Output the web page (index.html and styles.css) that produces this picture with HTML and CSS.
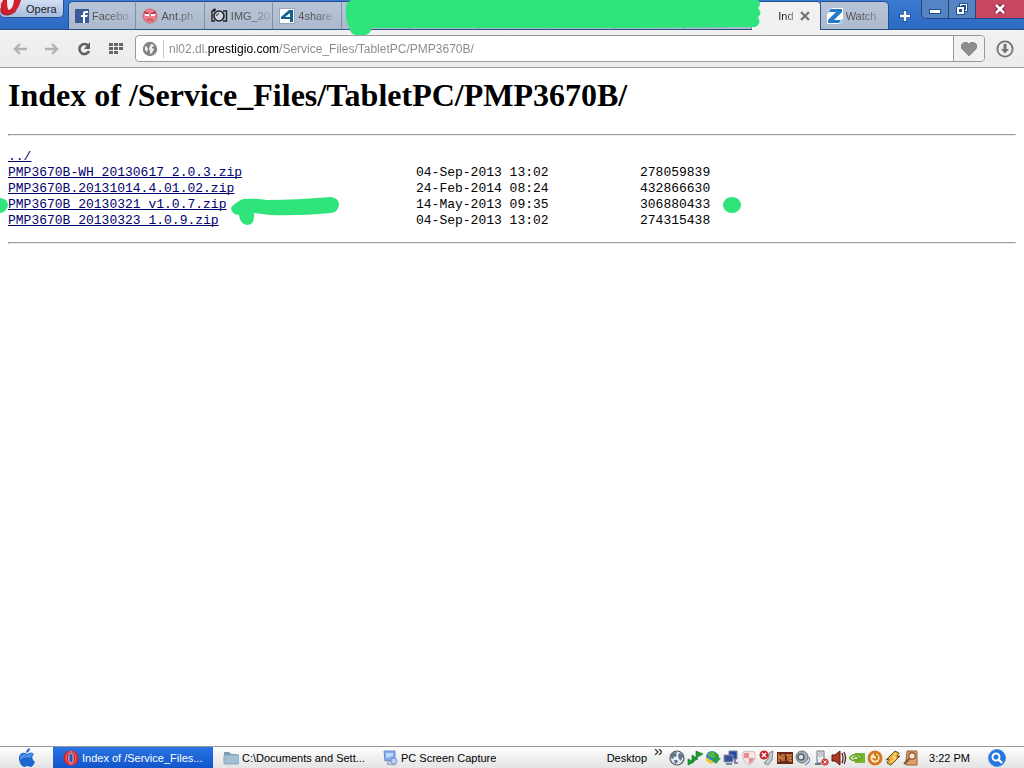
FILE: index.html
```html
<!DOCTYPE html>
<html lang="en">

<head>
    <meta charset="UTF-8">
    <meta name="viewport" content="width=device-width, initial-scale=1.0">
    <title>Index of /Service_Files/TabletPC/PMP3670B/</title>
    <link rel="stylesheet" href="styles.css">
</head>

<body>
    <header class="titlebar">
        <button class="opera">
            <svg width="22" height="17" viewBox="0 0 22 17">
                <path d="M1 0V12Q2 15 8 15Q18 13 21 0Z" fill="#d41f2a" />
                <path d="M1 8V12Q2 15 8 15Q13 14 16 11" fill="none" stroke="#8d1c2b" />
                <path d="M7 0Q7 10 9 10Q13 9 14 0Z" fill="#eef1f8" />
                <path d="M1 0V4L3 0Z" fill="#eef1f8" />
            </svg>
            <span>Opera</span>
        </button>
        <nav class="tabs">
            <button class="tab">
                <svg width="14" height="14" viewBox="0 0 14 14">
                    <rect width="14" height="14" fill="#3b5998" />
                    <path d="M8 14V8H6V6H8V4Q8 2 11 2H13V4H11Q10 4 10 5V6H13L12 8H10V14Z" fill="#fff" />
                </svg>
                <span>Facebo</span>
            </button>
            <button class="tab">
                <svg width="16" height="16" viewBox="0 0 16 16">
                    <circle cx="8" cy="8" r="7" fill="#ef7f88" stroke="#d9606b" />
                    <path d="M2 4L7 6M14 4L9 6" stroke="#a8323f" stroke-width="1.4" />
                    <rect x="3" y="6" width="4" height="2" fill="#fff" />
                    <rect x="9" y="6" width="4" height="2" fill="#fff" />
                    <path d="M5 12Q8 9 11 12Z" fill="#fff" stroke="#b53c49" />
                </svg>
                <span>Ant.ph</span>
            </button>
            <button class="tab">
                <svg width="17" height="16" viewBox="0 0 17 16">
                    <path d="M4 3H1V13H4M12 3H15.500V13H12M2 1.500H5" fill="none" stroke="#222" stroke-width="1.4" />
                    <circle cx="8" cy="8" r="5" fill="#cdd5e2" stroke="#222" stroke-width="1.6" />
                    <path d="M5.500 8Q6 5.500 8 5.500" fill="none" stroke="#222" />
                </svg>
                <span>IMG_20</span>
            </button>
            <button class="tab">
                <svg width="16" height="16" viewBox="0 0 16 16">
                    <rect x=".5" y=".5" width="15" height="15" fill="#fff" stroke="#9aa9b9" />
                    <path d="M10 2H14V14H11V11H2V9ZM11 5L6 9H11Z" fill="#13618f" fill-rule="evenodd" />
                </svg>
                <span>4share</span>
            </button>
            <button class="tab" aria-label="Tab 5"></button>
            <button class="tab" aria-label="Tab 6"></button>
            <button class="tab" aria-label="Tab 7"></button>
            <button class="tab" aria-label="Tab 8"></button>
            <button class="tab" aria-label="Tab 9"></button>
            <button class="tab" aria-label="Tab 10"></button>
            <button class="tab active">
                <span>Ind</span>
                <svg width="10" height="10" viewBox="0 0 10 10">
                    <path d="M1 1L9 9M9 1L1 9" stroke="#777" stroke-width="2.4" />
                </svg>
            </button>
            <button class="tab last">
                <svg width="16" height="16" viewBox="0 0 16 16">
                    <rect width="16" height="16" fill="#fff" />
                    <path d="M0 0H5L1 6H0ZM16 16H12L15 11H16Z" fill="#a9cdee" />
                    <path d="M4 1H15V4L7 12H14L12 15H1V12L9 4H2Z" fill="#257bc4" />
                </svg>
                <span>Watch</span>
            </button>
        </nav>
        <button class="new-tab" aria-label="New tab">
            <svg width="12" height="12" viewBox="0 0 12 12">
                <path d="M6 0V12M0 6H12" stroke="#1c4e99" stroke-width="4" />
                <path d="M6 1V11M1 6H11" stroke="#fff" stroke-width="2.4" />
            </svg>
        </button>
        <div class="window-buttons">
            <button aria-label="Minimize">
                <svg width="12" height="12" viewBox="0 0 12 12">
                    <rect x=".5" y="6.5" width="11" height="4" fill="#fff" stroke="#24508f" />
                </svg>
            </button>
            <button aria-label="Restore">
                <svg width="12" height="12" viewBox="0 0 12 12">
                    <rect x="3" y="0" width="9" height="9" rx="1" fill="#24508f" />
                    <rect x="4.500" y="1.500" width="6" height="6" fill="none" stroke="#fff" />
                    <rect x="0" y="3" width="9" height="9" rx="1" fill="#24508f" />
                    <rect x="2" y="5" width="5" height="5" fill="#24508f" stroke="#fff" stroke-width="2" />
                </svg>
            </button>
            <button class="close" aria-label="Close">
                <svg width="12" height="10" viewBox="0 0 12 10">
                    <path d="M2 1L10 9M10 1L2 9" stroke="#86233b" stroke-width="5" />
                    <path d="M2 1L10 9M10 1L2 9" stroke="#fff" stroke-width="2.6" />
                </svg>
            </button>
        </div>
    </header>

    <div class="toolbar">
        <button class="tool" aria-label="Back">
            <svg width="14" height="12" viewBox="0 0 14 12">
                <path d="M7 1L2 6L7 11M2 6H14" fill="none" stroke="#b2b2b2" stroke-width="2.4" />
            </svg>
        </button>
        <button class="tool" aria-label="Forward">
            <svg width="14" height="12" viewBox="0 0 14 12">
                <path d="M7 1L12 6L7 11M12 6H0" fill="none" stroke="#b2b2b2" stroke-width="2.4" />
            </svg>
        </button>
        <button class="tool" aria-label="Reload">
            <svg width="14" height="14" viewBox="0 0 14 14">
                <path d="M11 3.5A5 5 0 1 0 12 9" fill="none" stroke="#606060" stroke-width="2.6" />
                <path d="M13 0V7H7Z" fill="#606060" />
            </svg>
        </button>
        <button class="tool" aria-label="Speed Dial">
            <svg width="14" height="12" viewBox="0 0 14 12">
                <path d="M0 1.5H14M0 5.5H14" stroke="#666" stroke-width="3" stroke-dasharray="4 1" />
                <path d="M0 9.5H9" stroke="#666" stroke-width="3" stroke-dasharray="4 1" />
            </svg>
        </button>
        <form class="address">
            <svg class="globe" width="16" height="16" viewBox="0 0 16 16">
                <circle cx="8" cy="8" r="7.2" fill="#858585" />
                <path d="M9 3L12 4L12 5L10 6L10 7L12 8L10 12L8 13L8 10L7 8L8 5ZM3 5L5 6L6 8L5 11L3 9Z" fill="#efefef" />
            </svg>
            <input type="text" id="url" aria-label="Address" value="nl02.dl.prestigio.com/Service_Files/TabletPC/PMP3670B/">
            <button type="button" class="heart" aria-label="Bookmark">
                <svg width="16" height="14" viewBox="0 0 16 14">
                    <path d="M8 14L1 7Q-1 4 1 2Q5 -2 8 2Q11 -2 15 2Q17 4 15 7Z" fill="#8d8d8d" stroke="#737373" stroke-width=".6" />
                </svg>
            </button>
        </form>
        <button class="tool download" aria-label="Downloads">
            <svg width="18" height="18" viewBox="0 0 18 18">
                <circle cx="9" cy="9" r="7.6" fill="none" stroke="#747474" stroke-width="1.8" />
                <path d="M7.5 4H10.5V9H13L9 13.5L5 9H7.5Z" fill="#747474" />
            </svg>
        </button>
    </div>

    <main>
        <h1>Index of /Service_Files/TabletPC/PMP3670B/</h1>
        <hr>
        <table>
            <tbody>
                <tr>
                    <td class="name"><a href="../">../</a></td>
                    <td class="date"></td>
                    <td></td>
                </tr>
                <tr>
                    <td><a href="PMP3670B-WH_20130617_2.0.3.zip">PMP3670B-WH_20130617_2.0.3.zip</a></td>
                    <td>04-Sep-2013 13:02</td>
                    <td>278059839</td>
                </tr>
                <tr>
                    <td><a href="PMP3670B.20131014.4.01.02.zip">PMP3670B.20131014.4.01.02.zip</a></td>
                    <td>24-Feb-2014 08:24</td>
                    <td>432866630</td>
                </tr>
                <tr>
                    <td><a href="PMP3670B_20130321_v1.0.7.zip">PMP3670B_20130321_v1.0.7.zip</a></td>
                    <td>14-May-2013 09:35</td>
                    <td>306880433</td>
                </tr>
                <tr>
                    <td><a href="PMP3670B_20130323_1.0.9.zip">PMP3670B_20130323_1.0.9.zip</a></td>
                    <td>04-Sep-2013 13:02</td>
                    <td>274315438</td>
                </tr>
            </tbody>
        </table>
        <hr>
    </main>

    <footer class="taskbar">
        <button class="start" aria-label="Start">
            <svg width="18" height="20" viewBox="0 0 18 20">
                <path d="M9 6Q13 3 16 6Q12 10 17 14Q15 19 12 19Q9 17 7 19Q4 19 2 15Q-1 8 4 5Q6 4 9 6Z" fill="#1d66cf" />
                <path d="M2 9Q4 4 9 7Q12 4 15 6Q13 8 13 10Q7 8 2 12Z" fill="#4a90e8" />
                <path d="M8 5Q8 1 12 0Q12 4 8 5Z" fill="#1d66cf" />
            </svg>
        </button>
        <button class="task current">
            <svg width="16" height="16" viewBox="0 0 16 16">
                <ellipse cx="8" cy="8" rx="7.5" ry="7.5" fill="#d3202b" />
                <ellipse cx="8" cy="8" rx="5" ry="6.5" fill="none" stroke="#ee7a7d" />
                <ellipse cx="8" cy="8" rx="2.2" ry="5" fill="#1c5bc4" stroke="#f7c2c2" />
            </svg>
            <span>Index of /Service_Files...</span>
        </button>
        <button class="task">
            <svg width="16" height="14" viewBox="0 0 16 14">
                <path d="M1 1H6L8 3H14V12H1Z" fill="#7d9cb4" />
                <rect x="1" y="4" width="15" height="9" rx="1" fill="#a3bfd3" stroke="#86a3b8" />
            </svg>
            <span>C:\Documents and Sett...</span>
        </button>
        <button class="task">
            <svg width="15" height="16" viewBox="0 0 15 16">
                <path d="M1 1L12 1V10L2 11Z" fill="#7eaaf0" stroke="#6f8fc8" />
                <path d="M3 3H10V6L3 8Z" fill="#c3dafb" />
                <path d="M6 11H9L13 14L11 15L4 14Z" fill="#cfd7e4" stroke="#8a9ab5" />
                <circle cx="11" cy="11" r="3" fill="#b9d0f4" stroke="#7a98cc" />
            </svg>
            <span>PC Screen Capture</span>
        </button>
        <span class="desktop">Desktop</span>
        <button class="more" aria-label="More">
            <svg width="8" height="6" viewBox="0 0 8 6">
                <path d="M1 0L4 3L1 6M5 0L8 3L5 6" fill="none" stroke="#333" stroke-width="1.3" />
            </svg>
        </button>
        <div class="tray">
            <svg viewBox="0 0 16 16">
                <circle cx="8" cy="8" r="7" fill="#e3ebf4" stroke="#4b5764" stroke-width="1.2" />
                <path d="M2 5Q4 2 8 2L7 4L8 6L5 7L4 9L2 8ZM10 3L13 4L15 7L13 8L12 11L10 9L9 6ZM5 10L8 10L9 12L6 14Z" fill="#62758a" />
            </svg>
            <svg viewBox="0 0 16 16">
                <path d="M1 9L7 12L1 15ZM5 5L11 9L5 12ZM9 1L16 4L9 8Z" fill="#18a030" stroke="#0b6a1d" stroke-width=".6" />
            </svg>
            <svg viewBox="0 0 16 16">
                <circle cx="7" cy="7" r="6" fill="#2784ce" />
                <path d="M2 5L7 1L12 5L9 8L5 7Z" fill="#59b53b" />
                <path d="M9 2Q15 4 14 8H16L11 14L7 8H10Q11 6 9 2Z" fill="#2b9d3a" />
                <path d="M1 7L9 12L6 14L1 11Z" fill="#edc52e" />
            </svg>
            <svg viewBox="0 0 16 16">
                <path d="M6 1H14V9H6Z" fill="#2549a4" stroke="#78839c" />
                <path d="M1 5H10V12H1Z" fill="#34509c" stroke="#9098aa" />
                <path d="M3 14H9M12 9V13H15" fill="none" stroke="#7f86a6" stroke-width="2" />
            </svg>
            <svg viewBox="0 0 16 16">
                <path d="M2 2L8 1L14 2V8Q13 13 8 15Q3 13 2 8Z" fill="#f8e6e6" stroke="#d8bdbe" />
                <path d="M3 3H8V8H3ZM8 8H13Q12 12 8 14Z" fill="#e58e92" />
            </svg>
            <svg viewBox="0 0 16 16">
                <path d="M10 3L14 1L13 10L9 15L5 13L9 9Z" fill="#c7c8ce" stroke="#858892" />
                <circle cx="5" cy="5" r="4.5" fill="#c6242b" />
                <path d="M3 3L7 7M7 3L3 7" stroke="#fff" stroke-width="1.5" />
            </svg>
            <svg viewBox="0 0 16 16">
                <rect y="2" width="16" height="12" fill="#672817" />
                <path d="M2 12V5L5 10V4M7 4V11M9 5H12M11 5V11M15 5H13V11H15M13 8H15" fill="none" stroke="#de8b46" stroke-width="1.3" />
            </svg>
            <svg viewBox="0 0 16 16">
                <circle cx="7" cy="7" r="6" fill="#a9afba" stroke="#6f7580" />
                <circle cx="6" cy="7" r="3" fill="#dde0e7" stroke="#5c646f" stroke-width="1.6" />
                <path d="M12 14Q16 11 14 7M10 15Q13 14 14 12" fill="none" stroke="#5776b4" />
            </svg>
            <svg viewBox="0 0 16 16">
                <path d="M4 1H11V13H4Z" fill="#e8ecf1" stroke="#70747c" />
                <path d="M6 3H9V6H6Z" fill="#fff" stroke="#9a9da3" />
                <path d="M2 14H8" stroke="#70747c" stroke-width="2" />
                <circle cx="12" cy="12" r="3.600" fill="#d14139" />
                <path d="M10.500 10.500L13.500 13.500M13.500 10.500L10.500 13.500" stroke="#fff" />
            </svg>
            <svg viewBox="0 0 16 16">
                <path d="M1 5H4L9 1V15L4 11H1Z" fill="#b03a25" stroke="#521a15" />
                <path d="M11 3Q13 8 11 13M13 2Q16 8 13 14" fill="none" stroke="#572520" stroke-width="1.3" />
            </svg>
            <svg viewBox="0 0 16 16">
                <rect x="6" y="3" width="10" height="10" fill="#75b52c" />
                <path d="M0 8Q6 1 13 7Q7 14 0 8Z" fill="#d7ebba" stroke="#69a529" stroke-width="1.4" />
                <path d="M4 8Q7 4 10 8Q7 11 5 9" fill="none" stroke="#69a529" stroke-width="1.6" />
            </svg>
            <svg viewBox="0 0 16 16">
                <circle cx="8" cy="8" r="7.5" fill="#d4781e" />
                <circle cx="8" cy="8" r="4.500" fill="#fff1cf" />
                <path d="M8 1V5Q11 6 10 9Q7 11 6 8" fill="none" stroke="#d4781e" stroke-width="2" />
            </svg>
            <svg viewBox="0 0 16 16">
                <path d="M10 1L14 3L12 7L15 6L6 15L2 13L4 9L1 10Z" fill="#e9b040" stroke="#775018" />
                <path d="M11 3L8 7L11 8L6 12" fill="none" stroke="#fff0a4" />
            </svg>
            <svg viewBox="0 0 16 16">
                <path d="M4 1H14V15H3V11Z" fill="#e0a169" stroke="#98633b" />
                <circle cx="9" cy="6" r="3.200" fill="#f7ead9" stroke="#9a6238" stroke-width="1.4" />
                <path d="M6 9L1 14" stroke="#81512e" stroke-width="2" />
            </svg>
        </div>
        <time>3:22 PM</time>
        <button class="search" aria-label="Search">
            <svg width="18" height="18" viewBox="0 0 18 18">
                <circle cx="9" cy="9" r="8.5" fill="#2374df" stroke="#4f92e9" />
                <circle cx="8" cy="8" r="3.5" fill="none" stroke="#fff" stroke-width="2" />
                <path d="M10.5 10.5L14 14" stroke="#fff" stroke-width="2.4" />
            </svg>
        </button>
    </footer>

    <!-- marker strokes -->
    <svg class="marks" width="770" height="230" viewBox="0 0 770 230">
        <path d="M346 9Q345 2 352 0H758Q762 4 758 8Q763 13 758 17Q762 24 755 27L640 28H371Q371 35 364 35H356Q350 34 349 27Q345 20 346 9Z" />
        <path d="M0 198Q8 199 8 205Q7 212 0 213Z" />
        <path d="M231 208Q234 203 243 199Q257 198 267 200Q295 200 331 197Q339 198 339 205Q338 212 331 213Q300 216 270 215L254 213Q255 225 247 225Q240 224 239 215Q232 215 231 208Z" />
        <ellipse cx="732" cy="205" rx="9" ry="8" />
    </svg>
</body>

</html>
```

FILE: styles.css
```css
* {
    box-sizing: border-box;
}

body {
    margin: 0;
    min-height: 100vh;
    display: flex;
    flex-direction: column;
    position: relative;
    background-color: #fff;
    color: #000;
    font-family: "Liberation Sans", Arial, sans-serif;
    font-size: 11px;
}

button {
    display: flex;
    align-items: center;
    justify-content: center;
    padding: 0;
    border: none;
    background: none;
    font: inherit;
    color: inherit;
}

svg {
    flex: none;
}

/* title bar */
.titlebar {
    display: flex;
    align-items: flex-start;
    height: 30px;
    background: linear-gradient(#3b7bd2, #2c69c3);
    border-bottom: 1px solid #2b4f87;
}

.opera {
    width: 64px;
    height: 18px;
    margin-right: 4px;
    justify-content: flex-start;
    gap: 4px;
    color: #222;
    background: linear-gradient(#d3def0, #a5bce0);
    border: 1px solid #28508c;
    border-top: none;
    border-left: none;
    border-radius: 0 0 5px 5px;
}

.tabs {
    flex: 1;
    display: flex;
    align-self: flex-end;
    height: 28px;
}

.tab {
    flex: 1 1 68px;
    min-width: 0;
    justify-content: flex-start;
    gap: 3px;
    padding: 0 4px 0 6px;
    color: #555;
    background: linear-gradient(#b8c5d8, #adb9cd);
    border-top: 1px solid #24508f;
    border-right: 1px solid #8090a8;
}

.tab:first-child {
    border-left: 1px solid #24508f;
    border-radius: 5px 0 0 0;
}

.tab span {
    flex: 1;
    text-align: left;
    white-space: nowrap;
    -webkit-mask-image: linear-gradient(90deg, #000 40%, rgba(0, 0, 0, 0.2));
    mask-image: linear-gradient(90deg, #000 40%, rgba(0, 0, 0, 0.2));
}

.tab.active {
    height: 29px;
    padding: 0 10px 0 26px;
    color: #222;
    background: #f1f1f1;
    border-right-color: #28508c;
    border-radius: 4px 4px 0 0;
}

.tab.last {
    border-right-color: #24508f;
    border-radius: 0 5px 0 0;
}

.new-tab {
    width: 32px;
    height: 32px;
}

.window-buttons {
    display: flex;
    height: 19px;
    border: 1px solid #24487e;
    border-top: none;
    border-right: none;
    border-radius: 0 0 0 5px;
    overflow: hidden;
}

.window-buttons button {
    width: 27px;
    background: #5584c4;
    border-right: 1px solid #24487e;
}

.window-buttons .close {
    width: 48px;
    background: #c84762;
    border: none;
}

/* toolbar */
.toolbar {
    display: flex;
    align-items: center;
    height: 38px;
    padding: 0 4px;
    background: linear-gradient(#f1f1f1, #ececec);
    border-bottom: 1px solid #a0a0a0;
}

.tool {
    width: 32px;
    height: 28px;
}

.address {
    flex: 1;
    display: flex;
    align-items: center;
    height: 27px;
    margin: 0 4px 0 3px;
    background: #fff;
    border: 1px solid #989898;
    border-radius: 4px;
    overflow: hidden;
}

.globe {
    margin: 0 5px 0 6px;
}

#url {
    flex: 1;
    min-width: 0;
    height: 18px;
    padding: 0 0 0 5px;
    border: none;
    border-left: 1px solid #c8c8c8;
    outline: none;
    font: 12px "Liberation Sans", Arial, sans-serif;
    /* domain is darker than the rest of the address */
    color: transparent;
    background: linear-gradient(90deg, #888 44px, #000 44px, #000 115px, #888 115px);
    -webkit-background-clip: text;
    background-clip: text;
}

.heart {
    width: 31px;
    height: 100%;
    background: #f1f1f1;
    border-left: 1px solid #989898;
}

.download {
    width: 31px;
}

/* listing */
main {
    flex: 1;
    padding: 9px 8px;
    font-family: "Liberation Serif", "Times New Roman", serif;
}

h1 {
    margin: 0 0 20px;
    font-size: 32px;
    line-height: 37px;
}

hr {
    margin: 0;
    border: 1px inset #eee;
}

table {
    width: 100%;
    margin: 13px 0;
    table-layout: fixed;
    border-collapse: collapse;
    font: 13px/16px "Liberation Mono", "Courier New", monospace;
}

td {
    padding: 0;
    height: 16px;
    white-space: nowrap;
}

.name {
    width: 408px;
}

.date {
    width: 224px;
}

a {
    color: #00006e;
    text-underline-offset: 1px;
    text-decoration-skip-ink: none;
}

/* taskbar */
.taskbar {
    display: flex;
    align-items: center;
    height: 22px;
    background: linear-gradient(#fff, #f0f0f0 50%, #e4e4e4);
    border-top: 1px solid #999;
}

.start {
    width: 53px;
    height: 100%;
}

.task {
    width: 160px;
    height: 100%;
    justify-content: flex-start;
    gap: 3px;
    padding-left: 10px;
    white-space: nowrap;
}

.task.current {
    color: #fff;
    background: linear-gradient(#2a75e2, #1155cb);
}

.desktop {
    margin-left: auto;
}

.more {
    align-self: flex-start;
    width: 22px;
    height: 10px;
}

.tray {
    display: flex;
    gap: 2px;
}

.tray svg {
    width: 16px;
    height: 16px;
}

time {
    margin-left: 10px;
}

.search {
    width: 54px;
    height: 100%;
}

.marks {
    position: absolute;
    top: 0;
    left: 0;
    fill: #2fe47a;
    pointer-events: none;
}
```
